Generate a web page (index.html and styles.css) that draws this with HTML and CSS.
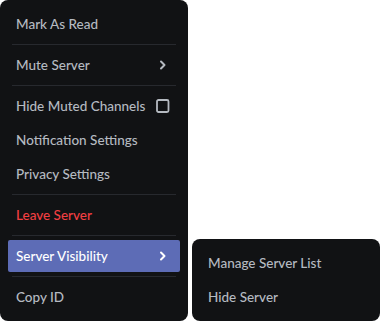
FILE: index.html
```html
<!DOCTYPE html>
<html>
<head>
<meta charset="utf-8">
<link rel="stylesheet" href="styles.css">
</head>
<body>
<div class="menu main">
  <div class="item"><span>Mark As Read</span></div>
  <div class="sep"></div>
  <div class="item"><span>Mute Server</span>
    <svg class="icon" viewBox="0 0 18 18"><path d="M7 5.5 L10.5 9 L7 12.5" fill="none" stroke="currentColor" stroke-width="2" stroke-linecap="round" stroke-linejoin="round"/></svg>
  </div>
  <div class="sep"></div>
  <div class="item"><span>Hide Muted Channels</span>
    <svg class="icon" viewBox="0 0 18 18"><rect x="3" y="3" width="11.5" height="12" rx="1.5" fill="none" stroke="currentColor" stroke-width="1.8"/></svg>
  </div>
  <div class="item"><span>Notification Settings</span></div>
  <div class="item"><span>Privacy Settings</span></div>
  <div class="sep"></div>
  <div class="item danger"><span>Leave Server</span></div>
  <div class="sep"></div>
  <div class="item active"><span>Server Visibility</span>
    <svg class="icon" viewBox="0 0 18 18"><path d="M7 5.5 L10.5 9 L7 12.5" fill="none" stroke="currentColor" stroke-width="2" stroke-linecap="round" stroke-linejoin="round"/></svg>
  </div>
  <div class="sep"></div>
  <div class="item"><span>Copy ID</span></div>
</div>
<div class="menu sub">
  <div class="item"><span>Manage Server List</span></div>
  <div class="item"><span>Hide Server</span></div>
</div>
</body>
</html>
```
FILE: styles.css
```css
html, body {
  margin: 0;
  padding: 0;
  background: #ffffff;
}
body {
  position: relative;
  width: 380px;
  height: 321px;
  overflow: hidden;
  font-family: "Lato", "Noto Sans", sans-serif;
}
.menu {
  box-sizing: border-box;
  width: 188px;
  background: #111214;
  border-radius: 8px;
  padding: 6px 8px;
}
.sub {
  position: absolute;
  left: 192px;
  top: 239px;
}
.item {
  box-sizing: border-box;
  height: 32px;
  margin: 2px 0;
  padding: 6px 8px;
  border-radius: 2px;
  display: flex;
  align-items: center;
  justify-content: space-between;
  white-space: nowrap;
  color: #b5bac1;
  font-size: 13.5px;
  font-weight: 500;
  line-height: 18px;
}
.item.danger {
  color: #f23f42;
}
.item.active {
  background: #5d6cb6;
  color: #ffffff;
}
.icon {
  width: 18px;
  height: 18px;
  flex: none;
}
.sep {
  height: 1px;
  margin: 4px;
  background: #27292e;
}
```
